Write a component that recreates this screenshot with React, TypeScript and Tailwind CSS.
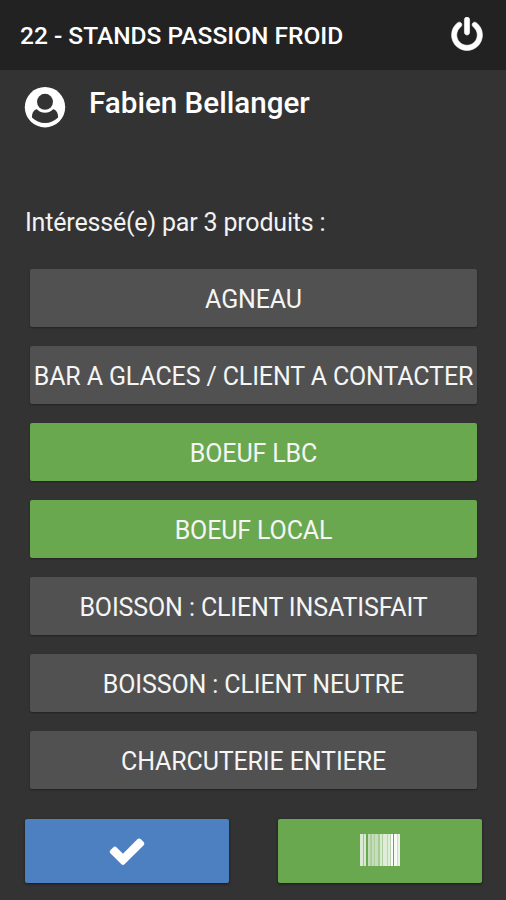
interface Product {
  label: string;
  selected: boolean;
}

const products: Product[] = [
  { label: "AGNEAU", selected: false },
  { label: "BAR A GLACES / CLIENT A CONTACTER", selected: false },
  { label: "BOEUF LBC", selected: true },
  { label: "BOEUF LOCAL", selected: true },
  { label: "BOISSON : CLIENT INSATISFAIT", selected: false },
  { label: "BOISSON : CLIENT NEUTRE", selected: false },
  { label: "CHARCUTERIE ENTIERE", selected: false },
];

// x, width, opacity of each bar
const bars = [
  [0, 3, 0.75],
  [3, 1, 0.35],
  [4, 2, 0.75],
  [8, 2, 0.6],
  [10, 2, 0.45],
  [12, 2, 0.6],
  [14, 1, 0.45],
  [15, 3, 0.62],
  [18, 2, 0.4],
  [20, 2, 0.75],
  [22, 1, 0.45],
  [23, 4, 0.78],
  [27, 1, 0.55],
  [28, 2, 0.8],
  [30, 1, 0.5],
  [31, 2, 1],
  [34, 3, 0.95],
  [37, 1, 0.65],
  [38, 2, 0.85],
];

function PowerIcon() {
  return (
    <svg viewBox="0 0 1792 1792" className="h-9 w-9" fill="currentColor">
      <path d="M1664 896q0 156-61 298t-164 245-245 164-298 61-298-61-245-164-164-245-61-298q0-182 80.5-343t226.5-270q43-32 95.5-25t83.5 50q32 42 24.5 94.5t-49.5 84.5q-98 74-151.5 181t-53.5 228q0 104 40.5 198.5t109.5 163.5 163.5 109.5 198.5 40.5 198.5-40.5 163.5-109.5 109.5-163.5 40.5-198.5q0-121-53.5-228t-151.5-181q-42-32-49.5-84.5t24.5-94.5q31-43 84-50t95 25q146 109 226.5 270t80.5 343zm-640-768v640q0 52-38 90t-90 38-90-38-38-90v-640q0-52 38-90t90-38 90 38 38 90z" stroke="currentColor" strokeWidth="30" />
    </svg>
  );
}

function UserIcon() {
  return (
    <svg viewBox="0 0 42 42" className="h-[42px] w-[42px]">
      <circle cx="21" cy="21.2" r="20.2" fill="#fff" />
      <path d="M12.5 23.3C9 24.500 7.900 28 7.900 31.500C11.500 35 16 37 21 37s9.500-2 13.100-5.500C34.100 28 33 24.500 29.500 23.300Z" fill="#333" />
      <circle cx="21" cy="15.800" r="11" fill="#fff" />
      <circle cx="21" cy="15.800" r="8" fill="#333" />
    </svg>
  );
}

function CheckIcon() {
  return (
    <svg viewBox="0 0 1792 1792" className="h-10 w-10" fill="currentColor">
      <path d="M1671 566q0 40-28 68l-724 724-136 136q-28 28-68 28t-68-28l-136-136-362-362q-28-28-28-68t28-68l136-136q28-28 68-28t68 28l294 295 656-657q28-28 68-28t68 28l136 136q28 28 28 68z" />
    </svg>
  );
}

function BarcodeIcon() {
  return (
    <svg viewBox="0 0 40 32" className="h-8 w-10" fill="currentColor">
      {bars.map(([x, width, opacity]) => (
        <rect key={x} x={x} y="0" width={width} height="32" opacity={opacity} />
      ))}
    </svg>
  );
}

export default function App() {
  return (
    <div className="flex h-[900px] w-[506px] flex-col overflow-hidden bg-[#333333] font-['Roboto',sans-serif] text-white">
      <header className="flex h-[70px] shrink-0 items-center justify-between bg-[#222222] pr-[21px] pl-5">
        <h1 className="pt-[2px] text-[24.5px] leading-8 font-medium whitespace-nowrap">22 - STANDS PASSION FROID</h1>
        <button aria-label="Déconnexion">
          <PowerIcon />
        </button>
      </header>

      <section className="flex h-[123px] shrink-0 items-start gap-[23px] pt-4 pl-6">
        <UserIcon />
        <h2 className="text-[29.6px] leading-[34px] font-medium whitespace-nowrap">Fabien Bellanger</h2>
      </section>

      <p className="h-[76px] shrink-0 pt-[15px] pl-[25px] text-[25px] leading-[30px] tracking-[-0.18px] text-[#f2f2f2]">
        Intéressé(e) par 3 produits :
      </p>

      <div className="flex flex-col gap-[19px] pr-[29px] pl-[30px]">
        {products.map((product) => (
          <button
            key={product.label}
            className={`flex h-[58px] items-center justify-center rounded-[2px] pt-1 text-[25px] tracking-[-0.13px] whitespace-nowrap text-[#f5f5f5] shadow-[0_1px_2px_rgba(0,0,0,0.35)] ${
              product.selected ? "bg-[#6aa84f]" : "bg-[#515151]"
            }`}
          >
            {product.label}
          </button>
        ))}
      </div>

      <footer className="mt-[30px] flex justify-between pr-6 pl-[25px]">
        <button
          aria-label="Valider"
          className="flex h-16 w-[204px] items-center justify-center rounded-[2px] bg-[#4d80c1] shadow-[0_1px_3px_rgba(0,0,0,0.5)]"
        >
          <CheckIcon />
        </button>
        <button
          aria-label="Scanner"
          className="flex h-16 w-[204px] items-center justify-center rounded-[2px] bg-[#6aa84f] pb-[2px] shadow-[0_1px_3px_rgba(0,0,0,0.5)]"
        >
          <BarcodeIcon />
        </button>
      </footer>
    </div>
  );
}
